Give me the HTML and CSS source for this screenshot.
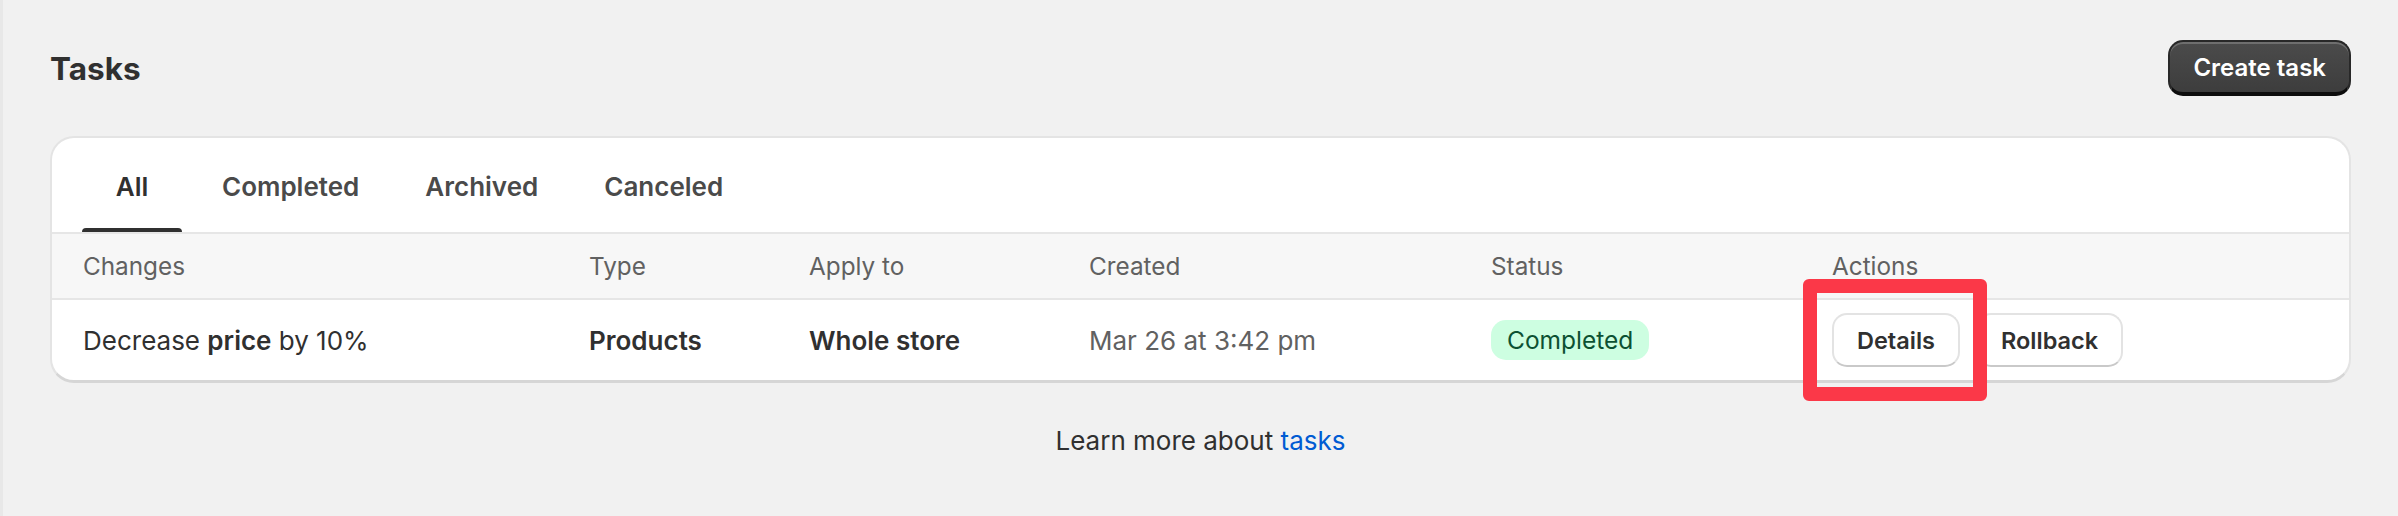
FILE: index.html
```html
<!DOCTYPE html>
<html lang="en">
<head>
  <meta charset="UTF-8" />
  <title>Tasks</title>
  <meta name="viewport" content="width=device-width, initial-scale=1.0" />
  <link rel="stylesheet" href="styles.css">
</head>
<body>

  <div class="page">
    <div class="page-header">
      <h1>Tasks</h1>
      <button class="btn-primary">Create task</button>
    </div>

    <div class="card">
      <div class="tabs">
        <button class="tab active">All</button>
        <button class="tab">Completed</button>
        <button class="tab">Archived</button>
        <button class="tab">Canceled</button>
      </div>

      <div class="row head">
        <div class="cell">Changes</div>
        <div class="cell">Type</div>
        <div class="cell">Apply to</div>
        <div class="cell">Created</div>
        <div class="cell">Status</div>
        <div class="cell">Actions</div>
      </div>

      <div class="row">
        <div class="cell">Decrease <b>price</b> by 10%</div>
        <div class="cell"><b>Products</b></div>
        <div class="cell"><b>Whole store</b></div>
        <div class="cell muted">Mar 26 at 3:42 pm</div>
        <div class="cell"><span class="badge">Completed</span></div>
        <div class="cell actions">
          <span class="highlight"></span>
          <button class="btn">Details</button>
          <button class="btn">Rollback</button>
        </div>
      </div>
    </div>

    <p class="footer-help">Learn more about <a href="#">tasks</a></p>
  </div>

</body>
</html>
```

FILE: styles.css
```css
body {
  margin: 0;
  padding: 0;
  height: 100vh;
  background: #f1f1f1;
  border-left: 3px solid #e8e8e8;
  box-sizing: border-box;
  overflow: hidden;
  font-family: Inter, "Noto Sans", sans-serif;
  color: #303030;
}

.page {
  padding: 40px 47px 0 47px;
}

.page-header {
  display: flex;
  align-items: center;
  justify-content: space-between;
  height: 56px;
}

h1 {
  margin: 0;
  font-size: 31.5px;
  font-weight: 700;
  color: #303030;
}

.btn-primary {
  height: 56px;
  padding: 0 23px;
  font-family: inherit;
  font-size: 24px;
  font-weight: 600;
  color: #fff;
  background: linear-gradient(#4b4b4b, #3d3d3d);
  border: 2px solid #282828;
  border-bottom: 4px solid #0d0d0d;
  border-radius: 15px;
  box-shadow: inset 0 2px 0 rgba(255, 255, 255, 0.2);
}

.card {
  margin-top: 40px;
  background: #fff;
  border: 2px solid #e4e4e4;
  border-bottom: 3px solid #d6d6d6;
  border-radius: 24px;
}

.tabs {
  display: flex;
  height: 94px;
  padding: 0 30px;
  gap: 14px;
}

.tab {
  position: relative;
  min-width: 100px;
  padding: 2px 26px 0;
  background: none;
  border: none;
  font-family: inherit;
  font-size: 26px;
  font-weight: 600;
  color: #4a4a4a;
}

.tab.active {
  color: #303030;
}

.tab.active::after {
  content: "";
  position: absolute;
  left: 0;
  right: 0;
  bottom: 0;
  height: 4px;
  background: #303030;
  border-radius: 4px 4px 0 0;
}

.row {
  display: grid;
  grid-template-columns: 506px 220px 280px 402px 341px 1fr;
  align-items: center;
  padding-left: 31px;
  height: 80px;
  font-size: 26px;
}

.row.head {
  height: 64px;
  background: #f7f7f7;
  border-top: 2px solid #e6e6e6;
  border-bottom: 2px solid #e6e6e6;
  font-size: 24.3px;
  color: #616161;
}

.row b {
  font-weight: 600;
}

.muted {
  color: #616161;
}

.badge {
  display: inline-block;
  padding: 0 16px;
  line-height: 40px;
  border-radius: 15px;
  background: #cdfee1;
  color: #0c5132;
  font-size: 24.5px;
}

.actions {
  position: relative;
  display: flex;
  gap: 16px;
}

.btn {
  height: 54px;
  padding: 0 23px;
  font-family: inherit;
  font-size: 23.5px;
  font-weight: 600;
  color: #303030;
  background: #fff;
  border: 2px solid #e3e3e3;
  border-bottom-color: #c9c9c9;
  border-radius: 15px;
}

.highlight {
  position: absolute;
  left: -29px;
  top: -34px;
  width: 184px;
  height: 122px;
  box-sizing: border-box;
  border: 14px solid #fb3848;
  border-radius: 6px;
  pointer-events: none;
}

.footer-help {
  margin: 42px 0 0;
  text-align: center;
  font-size: 26px;
  color: #303030;
}

.footer-help a {
  color: #005bd3;
  text-decoration: none;
}
```
